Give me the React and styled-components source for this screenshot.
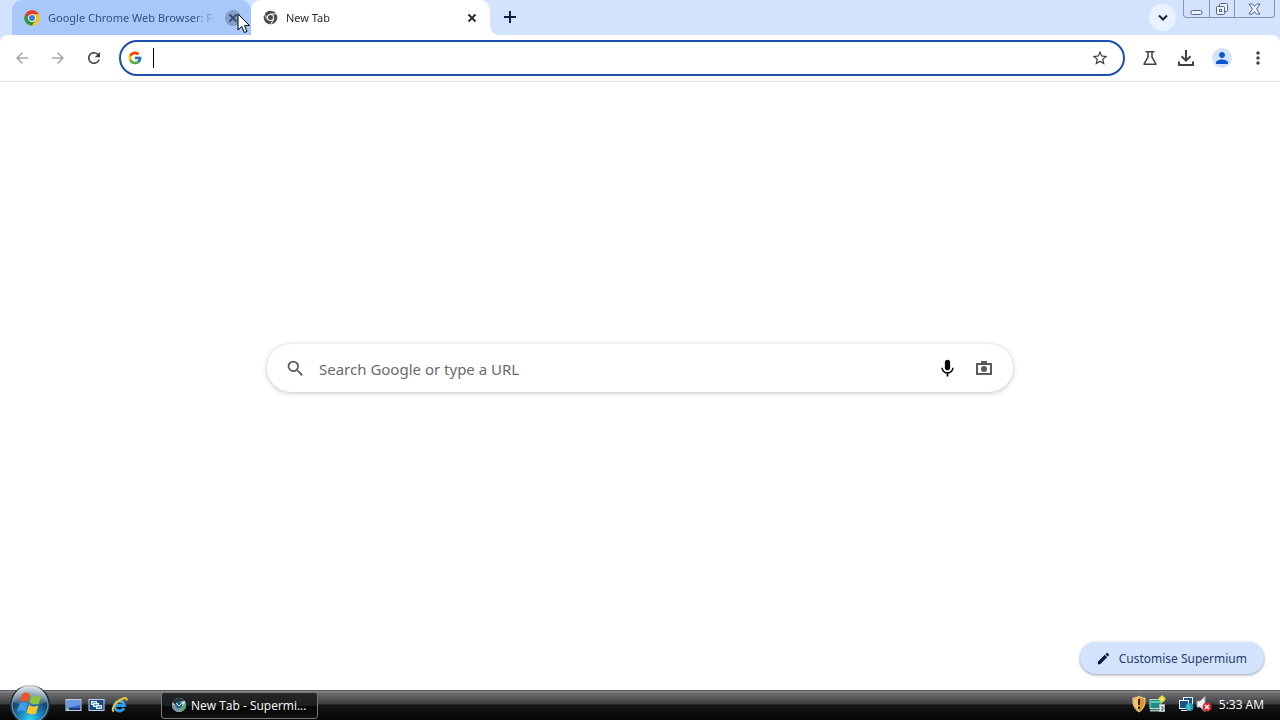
import React, { useState } from "react";
import styled, { createGlobalStyle } from "styled-components";
import {
  MdArrowBack,
  MdArrowForward,
  MdEdit,
  MdMic,
  MdMoreVert,
  MdPerson,
  MdRefresh,
  MdSearch,
  MdStarBorder,
} from "react-icons/md";

const GlobalStyle = createGlobalStyle`
  * {
    box-sizing: border-box;
  }

  body {
    margin: 0;
    overflow: hidden;
    font-family: "Noto Sans", "Open Sans", sans-serif;
    font-size: 12px;
  }

  button,
  input {
    font: inherit;
    color: inherit;
    border: none;
    padding: 0;
    background: none;
  }

  svg {
    display: block;
    flex-shrink: 0;
  }
`;

const Desktop = styled.div`
  display: flex;
  flex-direction: column;
  height: 100vh;
  overflow: hidden;
  background-color: white;
`;

/* Tab strip */

const TabStrip = styled.header`
  display: flex;
  align-items: flex-start;
  height: 35px;
  padding: 0 5px 0 12px;
  background-color: #d3e3fd;
`;

const Tab = styled.div`
  position: relative;
  display: flex;
  align-items: center;
  width: 239px;
  height: 35px;
  padding: 0 10px 0 12px;
  border-radius: 10px 10px 0 0;
  color: ${(props) => (props.$active ? "#2b2c2f" : "#35507f")};
  background-color: ${(props) => (props.$active ? "white" : "#a8c7fa")};

  &::after {
    content: "";
    display: ${(props) => (props.$active ? "block" : "none")};
    position: absolute;
    left: 100%;
    bottom: 0;
    width: 10px;
    height: 10px;
    background: radial-gradient(circle at 100% 0, transparent 10px, white 10px);
  }
`;

const TabTitle = styled.span`
  flex: 1;
  min-width: 0;
  margin-left: 8px;
  margin-right: 4px;
  white-space: nowrap;
  font-size: 11px;
  line-height: 16px;
  mask-image: linear-gradient(to left, transparent 4px, black 28px);
`;

const TabClose = styled.button`
  display: grid;
  place-items: center;
  width: 16px;
  height: 16px;
  border-radius: 50%;
  background-color: ${(props) => (props.$hovered ? "#869dc8" : "transparent")};
`;

const NewTabButton = styled.button`
  display: grid;
  place-items: center;
  width: 28px;
  height: 28px;
  margin: 3px auto 0 6px;
  color: #0a2044;
`;

const TabSearchButton = styled.button`
  display: grid;
  place-items: center;
  width: 27px;
  height: 27px;
  margin: 4px 7px 0 0;
  border-radius: 50%;
  color: #14243d;
  background-color: #e9f2fe;
`;

const WindowControls = styled.div`
  display: flex;
  height: 18px;
  border: 1px solid #8494b5;
  border-top: none;
  border-radius: 0 0 4px 4px;
`;

const WindowButton = styled.button`
  display: grid;
  place-items: center;
  width: ${(props) => (props.$wide ? 40 : 25)}px;
  color: #56658a;

  & + & {
    border-left: 1px solid #8494b5;
  }
`;

/* Toolbar */

const ToolbarBack = styled.div`
  background-color: #d3e3fd;
`;

const Toolbar = styled.nav`
  display: flex;
  align-items: center;
  height: 47px;
  padding: 0 4px;
  border-bottom: 1px solid #dfe1e5;
  border-radius: 8px 8px 0 0;
  background-color: white;
`;

const ToolButton = styled.button`
  display: grid;
  place-items: center;
  width: 36px;
  height: 34px;
  color: #3f4043;

  &:disabled {
    color: #a5a6a8;
  }
`;

const Omnibox = styled.div`
  flex: 1;
  display: flex;
  align-items: center;
  height: 36px;
  margin: 0 7px;
  padding: 0 14px 0 7px;
  border: 2px solid #1c50ac;
  border-radius: 18px;
`;

const Caret = styled.span`
  width: 1px;
  height: 20px;
  margin-left: 11px;
  background-color: black;
`;

const OmniboxInput = styled.input`
  flex: 1;
  min-width: 0;
  height: 28px;
  font-size: 14px;
  outline: none;
`;

const Avatar = styled.span`
  display: grid;
  place-items: center;
  width: 20px;
  height: 20px;
  border-radius: 50%;
  color: #0b57d0;
  background-color: #d3e3fd;
`;

/* New tab page */

const Page = styled.main`
  flex: 1;
  display: flex;
  flex-direction: column;
`;

const SearchArea = styled.section`
  flex: 1;
  display: flex;
  align-items: center;
  justify-content: center;
  padding: 12px 16px 0;
`;

const SearchBox = styled.form`
  display: flex;
  align-items: center;
  width: 100%;
  max-width: 746px;
  height: 48px;
  padding: 0 17px 0 18px;
  border-radius: 24px;
  background-color: white;
  box-shadow: 0 1px 5px rgba(32, 33, 36, 0.28);
`;

const SearchInput = styled.input`
  flex: 1;
  min-width: 0;
  height: 40px;
  margin: 2px 0 0 13px;
  font-size: 15px;
  outline: none;

  &::placeholder {
    color: #6a6b6d;
    opacity: 1;
  }
`;

const SearchButton = styled.button`
  display: grid;
  place-items: center;
  width: 24px;
  height: 24px;
  margin-left: 13px;
  color: ${(props) => props.$color};
`;

const PageFooter = styled.footer`
  display: flex;
  justify-content: flex-end;
  padding: 0 16px 16px;
`;

const CustomiseButton = styled.button`
  display: flex;
  align-items: center;
  gap: 8px;
  height: 32px;
  padding: 0 17px 0 16px;
  border-radius: 16px;
  color: #1f3c6b;
  background-color: #d3e3fd;
  box-shadow: 0 1px 3px rgba(32, 50, 90, 0.5);
`;

/* Taskbar */

const Taskbar = styled.footer`
  display: flex;
  align-items: center;
  height: 30px;
  padding: 0 16px 1px 9px;
  color: white;
  font-family: "Open Sans", "Noto Sans", sans-serif;
  border-top: 1px solid #55585a;
  background: linear-gradient(
    #8f9192 0,
    #6c6e6f 2px,
    #3c3e3f 13px,
    #141515 14px,
    #050505 100%
  );
`;

const StartButton = styled.button`
  width: 42px;
  height: 42px;
`;

const QuickLaunch = styled.div`
  display: flex;
  gap: 6px;
  margin: 0 33px 0 14px;
`;

const TaskButton = styled.button`
  display: flex;
  align-items: center;
  gap: 4px;
  width: 157px;
  height: 27px;
  padding: 0 9px;
  border: 1px solid #77797a;
  border-radius: 3px;
  background: linear-gradient(#262727 0, #1b1c1c 50%, #050505 52%, #101010 100%);
`;

const Tray = styled.div`
  display: flex;
  align-items: center;
  gap: 2px;
  margin-left: auto;
  padding-bottom: 2px;
`;

const TrayGap = styled.span`
  width: 8px;
`;

const Clock = styled.time`
  margin-left: 5px;
  white-space: nowrap;
`;

const Pointer = styled.svg`
  position: absolute;
  left: 237px;
  top: 13px;
  pointer-events: none;
`;

const CloseIcon = () => (
  <svg width="10" height="10" viewBox="0 0 10 10" stroke="currentColor" strokeWidth="2">
    <path d="m1.500 1.500 7 7m0-7-7 7" />
  </svg>
);

const PlusIcon = () => (
  <svg width="12" height="12" viewBox="0 0 12 12" stroke="currentColor" strokeWidth="2">
    <path d="M6 0v12M0 6h12" />
  </svg>
);

const ChevronIcon = () => (
  <svg width="10" height="7" viewBox="0 0 10 7" fill="none" stroke="currentColor" strokeWidth="2">
    <path d="m1 1.500 4 4 4-4" />
  </svg>
);

const ChromeIcon = () => (
  <svg width="16" height="16" viewBox="0 0 48 48">
    <circle cx="24" cy="24" r="23" fill="#fbc116" />
    <path d="M4 12.5A23 23 0 0 1 44 12.5H24a11.5 11.5 0 0 0-10 17.2z" fill="#e33b2e" />
    <path
      d="M4 12.5 14 29.7A11.5 11.5 0 0 0 34 29.7L24 47A23 23 0 0 1 4 12.5z"
      fill="#269b48"
    />
    <circle cx="24" cy="24" r="11.5" fill="white" />
    <circle cx="24" cy="24" r="9" fill="#347fe5" />
  </svg>
);

const NewTabIcon = () => (
  <svg width="15" height="15" viewBox="0 0 48 48">
    <circle cx="24" cy="24" r="22" fill="#4a4b4e" />
    <path
      d="M24 12.5h20M14 29.7 4 12.5M34 29.7 24 47"
      stroke="white"
      strokeWidth="3"
    />
    <circle cx="24" cy="24" r="11.5" fill="white" />
    <circle cx="24" cy="24" r="8" fill="#4a4b4e" />
  </svg>
);

const GoogleIcon = () => (
  <svg width="14" height="14" viewBox="2 2 44 44">
    <path fill="#FFC107" d="M43.6 20H24v8h11.3A12 12 0 1 1 32 15.1l5.7-5.7A20 20 0 1 0 43.6 20z" />
    <path fill="#FF3D00" d="m6.3 14.7 6.6 4.8A12 12 0 0 1 32 15.1l5.7-5.7A20 20 0 0 0 6.3 14.7z" />
    <path fill="#4CAF50" d="M24 44c5.2 0 9.9-2 13.4-5.2l-6.2-5.2A12 12 0 0 1 12.7 28l-6.5 5A20 20 0 0 0 24 44z" />
    <path fill="#1976D2" d="M43.6 20H24v8h11.3a12 12 0 0 1-4.1 5.6l6.2 5.2C37 39.2 44 34 44 24c0-1.3-.1-2.7-.4-4z" />
  </svg>
);

const FlaskIcon = () => (
  <svg width="16" height="16" viewBox="0 0 16 16" fill="none" stroke="currentColor" strokeWidth="1.5">
    <path d="M3.5 1.7h9M6 2v5.2L2 14.2h12L10 7.2V2" strokeLinejoin="round" />
  </svg>
);

const DownloadIcon = () => (
  <svg width="18" height="18" viewBox="0 0 18 18" fill="none" stroke="currentColor" strokeWidth="2">
    <path d="M9 1v10.5M4.5 7.3 9 11.7l4.5-4.4M2 12.5V16h14v-3.5" />
  </svg>
);

const CameraIcon = () => (
  <svg width="18" height="16" viewBox="0 0 18 16">
    <path d="M2 4h14v10H2z" fill="none" stroke="currentColor" strokeWidth="2" />
    <path d="M6 3V1h6v2z" fill="currentColor" />
    <circle cx="9" cy="9" r="3" fill="currentColor" />
  </svg>
);

const MinimizeIcon = () => (
  <svg width="13" height="14" viewBox="0 0 13 14" fill="none" stroke="currentColor">
    <rect x="1" y="8.5" width="11" height="4" rx="1.5" fill="#eef4fe" />
  </svg>
);

const RestoreIcon = () => (
  <svg width="14" height="14" viewBox="0 0 14 14" fill="#eef4fe" stroke="currentColor">
    <rect x="4.5" y="1.5" width="8" height="8" rx="1" />
    <rect x="1.5" y="4.5" width="8" height="8" rx="1" />
    <rect x="4.5" y="7.5" width="2" height="2" />
  </svg>
);

const WindowCloseIcon = () => (
  <svg width="13" height="12" viewBox="0 0 13 12" fill="#eef4fe" stroke="currentColor">
    <path d="M1 1h3.5l2 2.5 2-2.5H12L8.5 6l3.5 5H8.5l-2-2.500-2 2.500H1l3.500-5z" />
  </svg>
);

const StartOrb = () => (
  <svg width="42" height="42" viewBox="0 0 42 42">
    <defs>
      <radialGradient id="orb" cx="50%" cy="90%" r="85%">
        <stop offset="0" stopColor="#35d3ef" />
        <stop offset="0.35" stopColor="#1787c0" />
        <stop offset="0.7" stopColor="#174468" />
        <stop offset="1" stopColor="#5b7f9b" />
      </radialGradient>
      <linearGradient id="orbShine" x1="0" y1="0" x2="0" y2="1">
        <stop offset="0" stopColor="white" stopOpacity="0.8" />
        <stop offset="1" stopColor="white" stopOpacity="0.1" />
      </linearGradient>
    </defs>
    <circle cx="21" cy="21" r="20" fill="#222b32" />
    <circle cx="21" cy="21" r="18" fill="url(#orb)" stroke="#8fa9bb" />
    <path d="M4 18a17 17 0 0 1 34 0c-10 5-24 4-34 0z" fill="url(#orbShine)" />
    <path d="M13 10c3-2 5-2 8 0l-2 8c-3-2-5-2-8.500 0z" fill="#ec5526" />
    <path d="M22.500 11c3 2 6 2 10 0l-2.500 8.500c-4 1.500-6 1-9.500-1z" fill="#8fc43e" />
    <path d="M10.500 20c3-2 5-2 8 0l-2 8c-3-2-5-2-8.500 0z" fill="#3f9de8" />
    <path d="M20 21c3 2 6 2 9.500 0L27 29.500c-4 1.500-6 1-9.500-1z" fill="#fcc72c" />
  </svg>
);

const ShowDesktopIcon = () => (
  <svg width="17" height="16" viewBox="0 0 17 16">
    <rect x="1" y="2.5" width="15" height="11" fill="#3b68c4" stroke="#c3cfdf" />
    <path d="M2 3h13v5L2 11z" fill="#6c97e2" />
    <path d="M2 12h13" stroke="#1b3872" strokeWidth="2" />
    <path d="M2 12h2" stroke="#72c765" strokeWidth="2" />
  </svg>
);

const SwitchWindowsIcon = () => (
  <svg width="17" height="16" viewBox="0 0 17 16">
    <rect x="1" y="2.5" width="15" height="11" fill="#184886" stroke="#c3d2e4" />
    <g fill="#6e9ed4" stroke="#eef6ff">
      <rect x="3.5" y="4.5" width="5" height="3" />
      <rect x="5.5" y="6.5" width="5" height="3" />
      <rect x="8.5" y="8.5" width="5" height="3" />
    </g>
  </svg>
);

const ExplorerIcon = () => (
  <svg width="17" height="16" viewBox="0 0 17 16" fill="none">
    <path d="M13 11.2A5 5 0 1 1 13.5 8.5H4" stroke="#2b9be9" strokeWidth="3" />
    <path d="M4.5 7.2A4.5 4.5 0 0 1 12 5.5" stroke="#8bd4fa" />
    <path d="M3 14.5C-1 13 5 4 12 1.5c3-1 4 0 3.500 2" stroke="#f4c534" strokeWidth="2" />
  </svg>
);

const SupermiumIcon = () => (
  <svg width="16" height="16" viewBox="0 0 16 16">
    <circle cx="8" cy="8" r="7" fill="#d5e3e9" />
    <path d="M1 7a7 7 0 0 0 7 8l2-4-5-2z" fill="#80929d" />
    <path d="M14.5 5A7 7 0 0 1 8 15l3-5z" fill="#54a866" />
    <path d="M1.5 5a7 7 0 0 1 12-1L8 5 5 9z" fill="#26343f" />
    <circle cx="8" cy="8" r="3.5" fill="#2c6792" />
    <path d="m5 6 3 3 4-4" stroke="#c9eef8" fill="none" />
  </svg>
);

const ShieldIcon = () => (
  <svg width="16" height="18" viewBox="0 0 16 18">
    <path d="M8 1c2 1.500 4 2 6 2 .5 6-1 11-6 14C3 14 1.500 9 2 3c2 0 4-.5 6-2z" fill="#e2952d" stroke="#ead5ac" />
    <path d="M8 2v14C4 13 2.500 9 3 4c2 0 3-.5 5-2z" fill="#f5c574" />
    <path d="M8 4v6M8 11.500V14" stroke="#38200b" strokeWidth="2" />
  </svg>
);

const MachineIcon = () => (
  <svg width="17" height="18" viewBox="0 0 17 18">
    <rect x="1" y="4.5" width="11" height="9" fill="#1e8c87" stroke="#b6d9d5" />
    <path d="M2 6h9v2H2z" fill="#58c5b6" />
    <path d="M1 15.5h11" stroke="#9fc4bf" strokeWidth="2" />
    <rect x="10.5" y="9.5" width="5" height="7" fill="#e2ebe9" stroke="#a9bbb8" />
    <path d="M12 12h2v3h-2" stroke="#3d5855" fill="none" />
    <circle cx="13" cy="4" r="3" fill="#e0df3d" />
    <path d="M13 0v8M9 4h8" stroke="#e0df3d" />
    <path d="M13 3v2" stroke="#fffde0" />
  </svg>
);

const NetworkIcon = () => (
  <svg width="16" height="18" viewBox="0 0 16 18">
    <rect x="5.5" y="2.5" width="9" height="8" fill="#164f83" stroke="#e2f1fa" />
    <rect x="1.5" y="5.5" width="9" height="8" fill="#17548b" stroke="white" />
    <path d="M3 15.5h6" stroke="white" />
    <circle cx="11.5" cy="12" r="4" fill="#258fc8" />
    <path d="M10 8.5c3 1 1 3 3 4l-2 3c-3-1-1-4-3-4z" fill="#45c7b4" />
  </svg>
);

const MutedIcon = () => (
  <svg width="16" height="18" viewBox="0 0 16 18">
    <path d="M1 6h3l5-4.500v15L4 12H1z" fill="#edf0f2" stroke="#9ca2a6" />
    <circle cx="11" cy="12" r="4.500" fill="#d92b2b" />
    <path d="m9 10 4 4m0-4-4 4" stroke="white" strokeWidth="1.500" />
  </svg>
);

const App = () => {
  const [url, setUrl] = useState("");
  const [query, setQuery] = useState("");

  return (
    <Desktop>
      <GlobalStyle />
      <TabStrip>
        <Tab>
          <ChromeIcon />
          <TabTitle>Google Chrome Web Browser: F</TabTitle>
          <TabClose $hovered aria-label="Close tab">
            <CloseIcon />
          </TabClose>
        </Tab>
        <Tab $active>
          <NewTabIcon />
          <TabTitle>New Tab</TabTitle>
          <TabClose aria-label="Close tab">
            <CloseIcon />
          </TabClose>
        </Tab>
        <NewTabButton aria-label="New tab">
          <PlusIcon />
        </NewTabButton>
        <TabSearchButton aria-label="Search tabs">
          <ChevronIcon />
        </TabSearchButton>
        <WindowControls>
          <WindowButton aria-label="Minimise">
            <MinimizeIcon />
          </WindowButton>
          <WindowButton aria-label="Restore">
            <RestoreIcon />
          </WindowButton>
          <WindowButton $wide aria-label="Close window">
            <WindowCloseIcon />
          </WindowButton>
        </WindowControls>
      </TabStrip>

      <ToolbarBack>
        <Toolbar>
          <ToolButton disabled aria-label="Back">
            <MdArrowBack size={18} />
          </ToolButton>
          <ToolButton disabled aria-label="Forward">
            <MdArrowForward size={18} />
          </ToolButton>
          <ToolButton aria-label="Reload">
            <MdRefresh size={18} />
          </ToolButton>
          <Omnibox>
            <GoogleIcon />
            <Caret />
            <OmniboxInput
              aria-label="Address and search bar"
              value={url}
              onChange={(e) => setUrl(e.target.value)}
            />
            <button aria-label="Bookmark this tab">
              <MdStarBorder size={18} color="#3f4043" />
            </button>
          </Omnibox>
          <ToolButton aria-label="Experiments">
            <FlaskIcon />
          </ToolButton>
          <ToolButton aria-label="Downloads">
            <DownloadIcon />
          </ToolButton>
          <ToolButton aria-label="Profile">
            <Avatar>
              <MdPerson size={18} />
            </Avatar>
          </ToolButton>
          <ToolButton aria-label="Menu">
            <MdMoreVert size={20} />
          </ToolButton>
        </Toolbar>
      </ToolbarBack>

      <Page>
        <SearchArea>
          <SearchBox onSubmit={(e) => e.preventDefault()}>
            <MdSearch size={21} color="#5a5b5e" />
            <SearchInput
              aria-label="Search"
              placeholder="Search Google or type a URL"
              value={query}
              onChange={(e) => setQuery(e.target.value)}
            />
            <SearchButton type="button" $color="black" aria-label="Search by voice">
              <MdMic size={21} />
            </SearchButton>
            <SearchButton type="button" $color="#5a5b5e" aria-label="Search by image">
              <CameraIcon />
            </SearchButton>
          </SearchBox>
        </SearchArea>
        <PageFooter>
          <CustomiseButton>
            <MdEdit size={15} color="#061e40" />
            Customise Supermium
          </CustomiseButton>
        </PageFooter>
      </Page>

      <Taskbar>
        <StartButton aria-label="Start">
          <StartOrb />
        </StartButton>
        <QuickLaunch>
          <button aria-label="Show desktop">
            <ShowDesktopIcon />
          </button>
          <button aria-label="Switch between windows">
            <SwitchWindowsIcon />
          </button>
          <button aria-label="Internet Explorer">
            <ExplorerIcon />
          </button>
        </QuickLaunch>
        <TaskButton>
          <SupermiumIcon />
          New Tab - Supermi...
        </TaskButton>
        <Tray>
          <ShieldIcon />
          <MachineIcon />
          <TrayGap />
          <NetworkIcon />
          <MutedIcon />
          <Clock>5:33 AM</Clock>
        </Tray>
      </Taskbar>

      <Pointer width="13" height="21" viewBox="0 0 13 21">
        <path
          d="M1 1v16l3.800-3.500L7.300 19.500l2.700-1.100-2.500-5.800H12.500z"
          fill="white"
          stroke="black"
        />
      </Pointer>
    </Desktop>
  );
};

export default App;
